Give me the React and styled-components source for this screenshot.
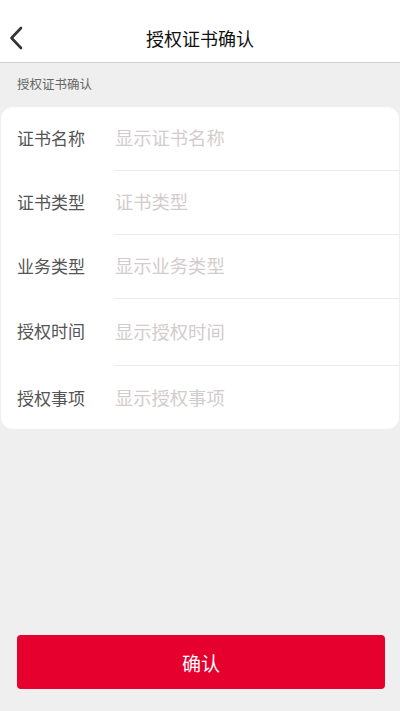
import React from "react";
import styled, { createGlobalStyle } from "styled-components";

const fields = [
  { label: "证书名称", value: "显示证书名称", height: 64 },
  { label: "证书类型", value: "证书类型", height: 64 },
  { label: "业务类型", value: "显示业务类型", height: 64 },
  { label: "授权时间", value: "显示授权时间", height: 67 },
  { label: "授权事项", value: "显示授权事项", height: 63 },
];

const App = () => {
  return (
    <>
      <GlobalStyle />
      <Page>
        <Header>
          <BackButton aria-label="返回">
            <svg width="14" height="24" viewBox="0 0 14 24" fill="none">
              <path
                d="M12 2 L2.5 12 L12 22"
                stroke="#333"
                strokeWidth="2.6"
                strokeLinecap="round"
                strokeLinejoin="round"
              />
            </svg>
          </BackButton>
          <Title>授权证书确认</Title>
        </Header>

        <SectionTitle>授权证书确认</SectionTitle>

        <Card>
          {fields.map((f, i) => (
            <Row key={f.label} h={f.height} last={i === fields.length - 1}>
              <Label>{f.label}</Label>
              <Value>{f.value}</Value>
            </Row>
          ))}
        </Card>

        <Spacer />

        <Footer>
          <ConfirmButton>确认</ConfirmButton>
        </Footer>
      </Page>
    </>
  );
};

export default App;

//styles

const GlobalStyle = createGlobalStyle`
  html, body {
    margin: 0;
    padding: 0;
    background: #efefef;
  }
  body {
    font-family: "Noto Sans CJK SC", "Noto Sans", sans-serif;
  }
  * {
    box-sizing: border-box;
  }
`;

const Page = styled.div`
  display: flex;
  flex-direction: column;
  min-height: 711px;
  background: #efefef;
`;

const Header = styled.div`
  position: relative;
  display: flex;
  align-items: center;
  justify-content: center;
  height: 63px;
  background: #fff;
  border-bottom: 1px solid #d2d2d2;
`;

const BackButton = styled.button`
  position: absolute;
  left: 9px;
  top: 26px;
  padding: 0;
  border: none;
  background: none;
  display: flex;
`;

const Title = styled.h1`
  margin: 0;
  padding-top: 14px;
  font-size: 18px;
  font-weight: normal;
  color: #111;
`;

const SectionTitle = styled.div`
  padding: 12px 17px 0;
  height: 44px;
  font-size: 12.5px;
  color: #666;
  line-height: 18px;
`;

const Card = styled.div`
  margin: 0 1px;
  background: #fff;
  border-radius: 12px;
  overflow: hidden;
`;

const Row = styled.div`
  display: flex;
  align-items: center;
  height: ${(props) => props.h}px;
  padding-left: 16px;
  padding-bottom: ${(props) => (props.last ? "1px" : "4px")};
  position: relative;

  &::after {
    content: "";
    display: ${(props) => (props.last ? "none" : "block")};
    position: absolute;
    left: 113px;
    right: 0;
    bottom: 0;
    height: 1px;
    background: #ebebeb;
  }
`;

const Label = styled.div`
  width: 98px;
  font-size: 17px;
  color: #555;
`;

const Value = styled.div`
  font-size: 18.3px;
  color: #d3cccc;
`;

const Spacer = styled.div`
  flex: 1;
`;

const Footer = styled.div`
  padding: 0 15px 22px 17px;
`;

const ConfirmButton = styled.button`
  display: block;
  width: 100%;
  height: 54px;
  border: none;
  border-radius: 4px;
  background: #e6002d;
  color: #fff;
  font-family: "Noto Sans CJK SC", sans-serif;
  font-size: 19px;
  cursor: pointer;
`;
